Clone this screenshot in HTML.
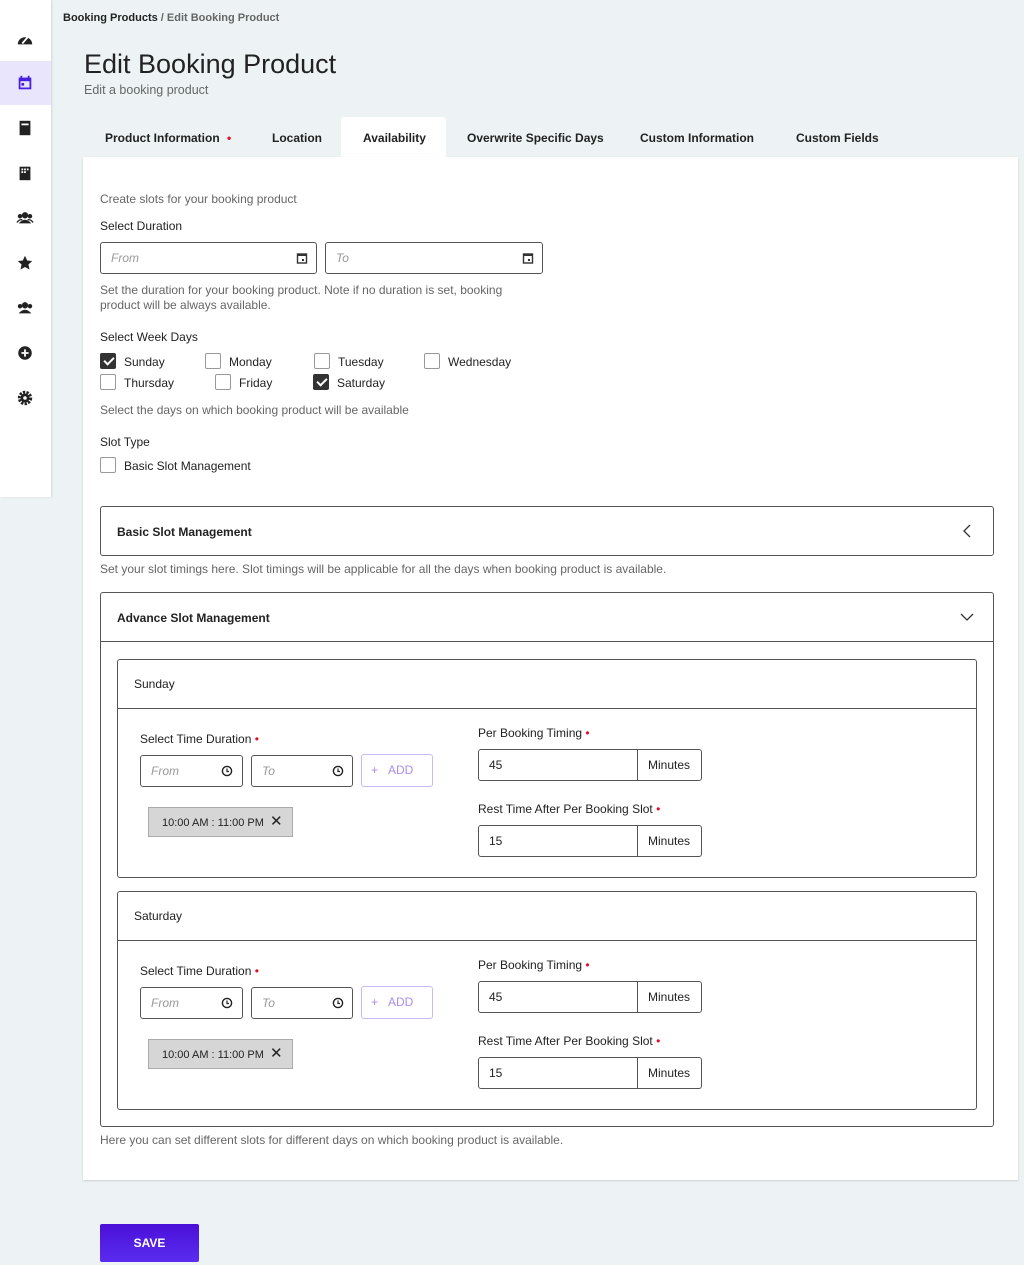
<!DOCTYPE html>
<html><head><meta charset="utf-8"><style>
*{box-sizing:border-box;margin:0;padding:0}
body{width:1024px;height:1265px;background:#edf3f5;font-family:"Liberation Sans",sans-serif;color:#222;position:relative;overflow:hidden;font-size:12px}
.a{position:absolute}
.g{color:#666}
.side{left:0;top:0;width:51px;height:497px;background:#fff;box-shadow:1px 0 2px rgba(0,0,0,.12)}
.ic{position:absolute;left:16px;width:18px;height:18px}
.tab{position:absolute;top:131px;font-size:12px;font-weight:bold;color:#222}
.card{left:83px;top:157px;width:935px;height:1023px;background:#fff;box-shadow:0 1px 2px rgba(0,0,0,.15)}
.inp{position:absolute;border:1px solid #555;border-radius:3px;background:#fff}
.ph{position:absolute;font-style:italic;color:#999;font-size:12px}
.cb{position:absolute;width:16px;height:16px;border:1px solid #999;border-radius:2px}
.cb.on{background:#333;border-color:#333}
.cb.on:after{content:"";position:absolute;left:5px;top:1px;width:4px;height:8px;border:solid #fff;border-width:0 2px 2px 0;transform:rotate(45deg)}
.lbl{position:absolute;font-size:12px;color:#222}
.box{position:absolute;border:1px solid #555;border-radius:3px}
.req:after{content:" •";color:#e0102a}
.chip{position:absolute;width:145px;height:30px;background:#d6d6d6;border:1px solid #aaa;font-size:11px;line-height:28px;padding-left:13px}
.add{position:absolute;width:72px;height:33px;border:1px solid #c9b8f5;border-radius:3px;color:#a98ef0;font-size:12px;line-height:31px;padding-left:9px}
</style></head><body>
<div class="a side">
<svg class="ic" style="top:30px" viewBox="0 0 20 20"><path d="M2 16a8 8 0 0 1 16 0z" fill="#222"/><path d="M7 15l6-7" stroke="#fff" stroke-width="2"/></svg>
<div class="a" style="left:0;top:61px;width:51px;height:44px;background:#e8e5fc"></div>
<svg class="ic" style="top:74px" viewBox="0 0 20 20"><rect x="3" y="4" width="14" height="13" fill="#4a20e0"/><rect x="5" y="2" width="2" height="4" fill="#4a20e0"/><rect x="13" y="2" width="2" height="4" fill="#4a20e0"/><rect x="5" y="8" width="10" height="7" fill="#e8e5fc"/><rect x="6" y="10" width="3" height="3" fill="#4a20e0"/></svg>
<svg class="ic" style="top:119px" viewBox="0 0 20 20"><rect x="4" y="2" width="12" height="16" fill="#222"/><rect x="6" y="5" width="8" height="2" fill="#fff"/></svg>
<svg class="ic" style="top:164px" viewBox="0 0 20 20"><rect x="4" y="3" width="12" height="15" fill="#222"/><rect x="6" y="5" width="2" height="2" fill="#fff"/><rect x="9" y="5" width="2" height="2" fill="#fff"/><rect x="12" y="5" width="2" height="2" fill="#fff"/><rect x="6" y="8" width="2" height="2" fill="#fff"/><rect x="9" y="8" width="2" height="2" fill="#fff"/></svg>
<svg class="ic" style="top:209px" viewBox="0 0 20 20"><circle cx="10" cy="7" r="3.5" fill="#222"/><circle cx="4.5" cy="8" r="2.5" fill="#222"/><circle cx="15.5" cy="8" r="2.5" fill="#222"/><path d="M3 16q7-8 14 0z" fill="#222"/><path d="M1 15q3-4 6-3M19 15q-3-4-6-3" stroke="#222" stroke-width="1.5" fill="none"/></svg>
<svg class="ic" style="top:254px" viewBox="0 0 20 20"><path d="M10 2l2.4 5.2 5.6.6-4.2 3.8 1.2 5.6L10 14.4 5 17.2l1.2-5.6L2 7.8l5.6-.6z" fill="#222"/></svg>
<svg class="ic" style="top:299px" viewBox="0 0 20 20"><circle cx="10" cy="7" r="3.5" fill="#222"/><circle cx="4.5" cy="8" r="2.5" fill="#222"/><circle cx="15.5" cy="8" r="2.5" fill="#222"/><path d="M3 16q7-8 14 0z" fill="#222"/></svg>
<svg class="ic" style="top:344px" viewBox="0 0 20 20"><circle cx="10" cy="10" r="7.5" fill="#222"/><path d="M10 6v8M6 10h8" stroke="#fff" stroke-width="2"/></svg>
<svg class="ic" style="top:389px" viewBox="0 0 20 20"><circle cx="10" cy="10" r="6" fill="none" stroke="#222" stroke-width="4" stroke-dasharray="2.4 1.3"/><circle cx="10" cy="10" r="5" fill="#222"/><circle cx="10" cy="10" r="2" fill="#fff"/></svg>
</div>
<div class="a" style="left:63px;top:12px;font-size:11px;font-weight:bold;color:#222">Booking Products <span style="color:#666">/ Edit Booking Product</span></div>
<div class="a" style="left:84px;top:49px;font-size:27px;color:#222">Edit Booking Product</div>
<div class="a g" style="left:84px;top:83px;font-size:12.5px">Edit a booking product</div>
<div class="a" style="left:341px;top:117px;width:105px;height:42px;background:#fff;border-radius:3px 3px 0 0"></div>
<div class="tab" style="left:105px">Product Information <span style="color:#e0102a;margin-left:4px">•</span></div>
<div class="tab" style="left:272px">Location</div>
<div class="tab" style="left:363px">Availability</div>
<div class="tab" style="left:467px">Overwrite Specific Days</div>
<div class="tab" style="left:640px">Custom Information</div>
<div class="tab" style="left:796px">Custom Fields</div>
<div class="a card"></div>

<div class="a g" style="left:100px;top:192px">Create slots for your booking product</div>
<div class="lbl" style="left:100px;top:219px">Select Duration</div>
<div class="inp" style="left:100px;top:242px;width:217px;height:32px"></div><div class="ph" style="left:111px;top:251px">From</div>
<svg class="a" style="left:296px;top:252px" width="12" height="12" viewBox="0 0 12 12"><rect x="1.5" y="2" width="9" height="9" fill="none" stroke="#333" stroke-width="1.4"/><rect x="1.5" y="2" width="9" height="2" fill="#333"/><rect x="6" y="7" width="2" height="2" fill="#333"/></svg>
<div class="inp" style="left:325px;top:242px;width:218px;height:32px"></div><div class="ph" style="left:336px;top:251px">To</div>
<svg class="a" style="left:522px;top:252px" width="12" height="12" viewBox="0 0 12 12"><rect x="1.5" y="2" width="9" height="9" fill="none" stroke="#333" stroke-width="1.4"/><rect x="1.5" y="2" width="9" height="2" fill="#333"/><rect x="6" y="7" width="2" height="2" fill="#333"/></svg>
<div class="a g" style="left:100px;top:283px;width:440px;line-height:15px">Set the duration for your booking product. Note if no duration is set, booking product will be always available.</div>
<div class="lbl" style="left:100px;top:330px">Select Week Days</div>
<div class="cb on" style="left:100px;top:353px"></div><div class="lbl" style="left:124px;top:355px">Sunday</div>
<div class="cb" style="left:205px;top:353px"></div><div class="lbl" style="left:229px;top:355px">Monday</div>
<div class="cb" style="left:314px;top:353px"></div><div class="lbl" style="left:338px;top:355px">Tuesday</div>
<div class="cb" style="left:424px;top:353px"></div><div class="lbl" style="left:448px;top:355px">Wednesday</div>
<div class="cb" style="left:100px;top:374px"></div><div class="lbl" style="left:124px;top:376px">Thursday</div>
<div class="cb" style="left:215px;top:374px"></div><div class="lbl" style="left:239px;top:376px">Friday</div>
<div class="cb on" style="left:313px;top:374px"></div><div class="lbl" style="left:337px;top:376px">Saturday</div>
<div class="a g" style="left:100px;top:403px">Select the days on which booking product will be available</div>
<div class="lbl" style="left:100px;top:435px">Slot Type</div>
<div class="cb" style="left:100px;top:457px"></div><div class="lbl" style="left:124px;top:459px">Basic Slot Management</div>

<div class="box" style="left:100px;top:506px;width:894px;height:50px"></div>
<div class="lbl" style="left:117px;top:525px;font-weight:bold;font-size:12px">Basic Slot Management</div>
<svg class="a" style="left:962px;top:524px" width="10" height="14"><path d="M8 1L2 7l6 6" stroke="#333" fill="none" stroke-width="1.3"/></svg>
<div class="a g" style="left:100px;top:562px">Set your slot timings here. Slot timings will be applicable for all the days when booking product is available.</div>

<div class="box" style="left:100px;top:592px;width:894px;height:535px"></div>
<div class="a" style="left:101px;top:641px;width:892px;height:1px;background:#555"></div>
<div class="lbl" style="left:117px;top:611px;font-weight:bold">Advance Slot Management</div>
<svg class="a" style="left:960px;top:612px" width="14" height="10"><path d="M1 2l6 6 6-6" stroke="#333" fill="none" stroke-width="1.3"/></svg>

<div class="box" style="left:117px;top:659px;width:860px;height:219px"></div>
<div class="a" style="left:118px;top:708px;width:858px;height:1px;background:#555"></div>
<div class="lbl" style="left:134px;top:677px">Sunday</div>
<div class="lbl req" style="left:140px;top:732px">Select Time Duration</div>
<div class="inp" style="left:140px;top:755px;width:103px;height:32px"></div><div class="ph" style="left:151px;top:764px">From</div>
<svg class="a" style="left:221px;top:765px" width="12" height="12"><circle cx="6" cy="6" r="4.6" stroke="#222" stroke-width="1.4" fill="none"/><path d="M6 3.5V6.5h2" stroke="#222" fill="none" stroke-width="1.2"/></svg>
<div class="inp" style="left:251px;top:755px;width:102px;height:32px"></div><div class="ph" style="left:262px;top:764px">To</div>
<svg class="a" style="left:332px;top:765px" width="12" height="12"><circle cx="6" cy="6" r="4.6" stroke="#222" stroke-width="1.4" fill="none"/><path d="M6 3.5V6.5h2" stroke="#222" fill="none" stroke-width="1.2"/></svg>
<div class="add" style="left:361px;top:754px">+&nbsp;&nbsp;&nbsp;ADD</div>
<div class="chip" style="left:148px;top:807px">10:00 AM : 11:00 PM <span style="font-size:15px;margin-left:3px">✕</span></div>
<div class="lbl req" style="left:478px;top:726px">Per Booking Timing</div>
<div class="inp" style="left:478px;top:749px;width:224px;height:32px"></div><div class="a" style="left:637px;top:749px;width:1px;height:32px;background:#555"></div>
<div class="lbl" style="left:489px;top:758px">45</div><div class="lbl" style="left:648px;top:758px">Minutes</div>
<div class="lbl req" style="left:478px;top:802px">Rest Time After Per Booking Slot</div>
<div class="inp" style="left:478px;top:825px;width:224px;height:32px"></div><div class="a" style="left:637px;top:825px;width:1px;height:32px;background:#555"></div>
<div class="lbl" style="left:489px;top:834px">15</div><div class="lbl" style="left:648px;top:834px">Minutes</div>

<div class="box" style="left:117px;top:891px;width:860px;height:219px"></div>
<div class="a" style="left:118px;top:940px;width:858px;height:1px;background:#555"></div>
<div class="lbl" style="left:134px;top:909px">Saturday</div>
<div class="lbl req" style="left:140px;top:964px">Select Time Duration</div>
<div class="inp" style="left:140px;top:987px;width:103px;height:32px"></div><div class="ph" style="left:151px;top:996px">From</div>
<svg class="a" style="left:221px;top:997px" width="12" height="12"><circle cx="6" cy="6" r="4.6" stroke="#222" stroke-width="1.4" fill="none"/><path d="M6 3.5V6.5h2" stroke="#222" fill="none" stroke-width="1.2"/></svg>
<div class="inp" style="left:251px;top:987px;width:102px;height:32px"></div><div class="ph" style="left:262px;top:996px">To</div>
<svg class="a" style="left:332px;top:997px" width="12" height="12"><circle cx="6" cy="6" r="4.6" stroke="#222" stroke-width="1.4" fill="none"/><path d="M6 3.5V6.5h2" stroke="#222" fill="none" stroke-width="1.2"/></svg>
<div class="add" style="left:361px;top:986px">+&nbsp;&nbsp;&nbsp;ADD</div>
<div class="chip" style="left:148px;top:1039px">10:00 AM : 11:00 PM <span style="font-size:15px;margin-left:3px">✕</span></div>
<div class="lbl req" style="left:478px;top:958px">Per Booking Timing</div>
<div class="inp" style="left:478px;top:981px;width:224px;height:32px"></div><div class="a" style="left:637px;top:981px;width:1px;height:32px;background:#555"></div>
<div class="lbl" style="left:489px;top:990px">45</div><div class="lbl" style="left:648px;top:990px">Minutes</div>
<div class="lbl req" style="left:478px;top:1034px">Rest Time After Per Booking Slot</div>
<div class="inp" style="left:478px;top:1057px;width:224px;height:32px"></div><div class="a" style="left:637px;top:1057px;width:1px;height:32px;background:#555"></div>
<div class="lbl" style="left:489px;top:1066px">15</div><div class="lbl" style="left:648px;top:1066px">Minutes</div>

<div class="a g" style="left:100px;top:1133px">Here you can set different slots for different days on which booking product is available.</div>
<div class="a" style="left:100px;top:1224px;width:99px;height:38px;border-radius:2px;background:linear-gradient(#4a10d8,#5a2cf0);color:#fff;font-weight:bold;font-size:12px;text-align:center;line-height:38px">SAVE</div>
</body></html>
